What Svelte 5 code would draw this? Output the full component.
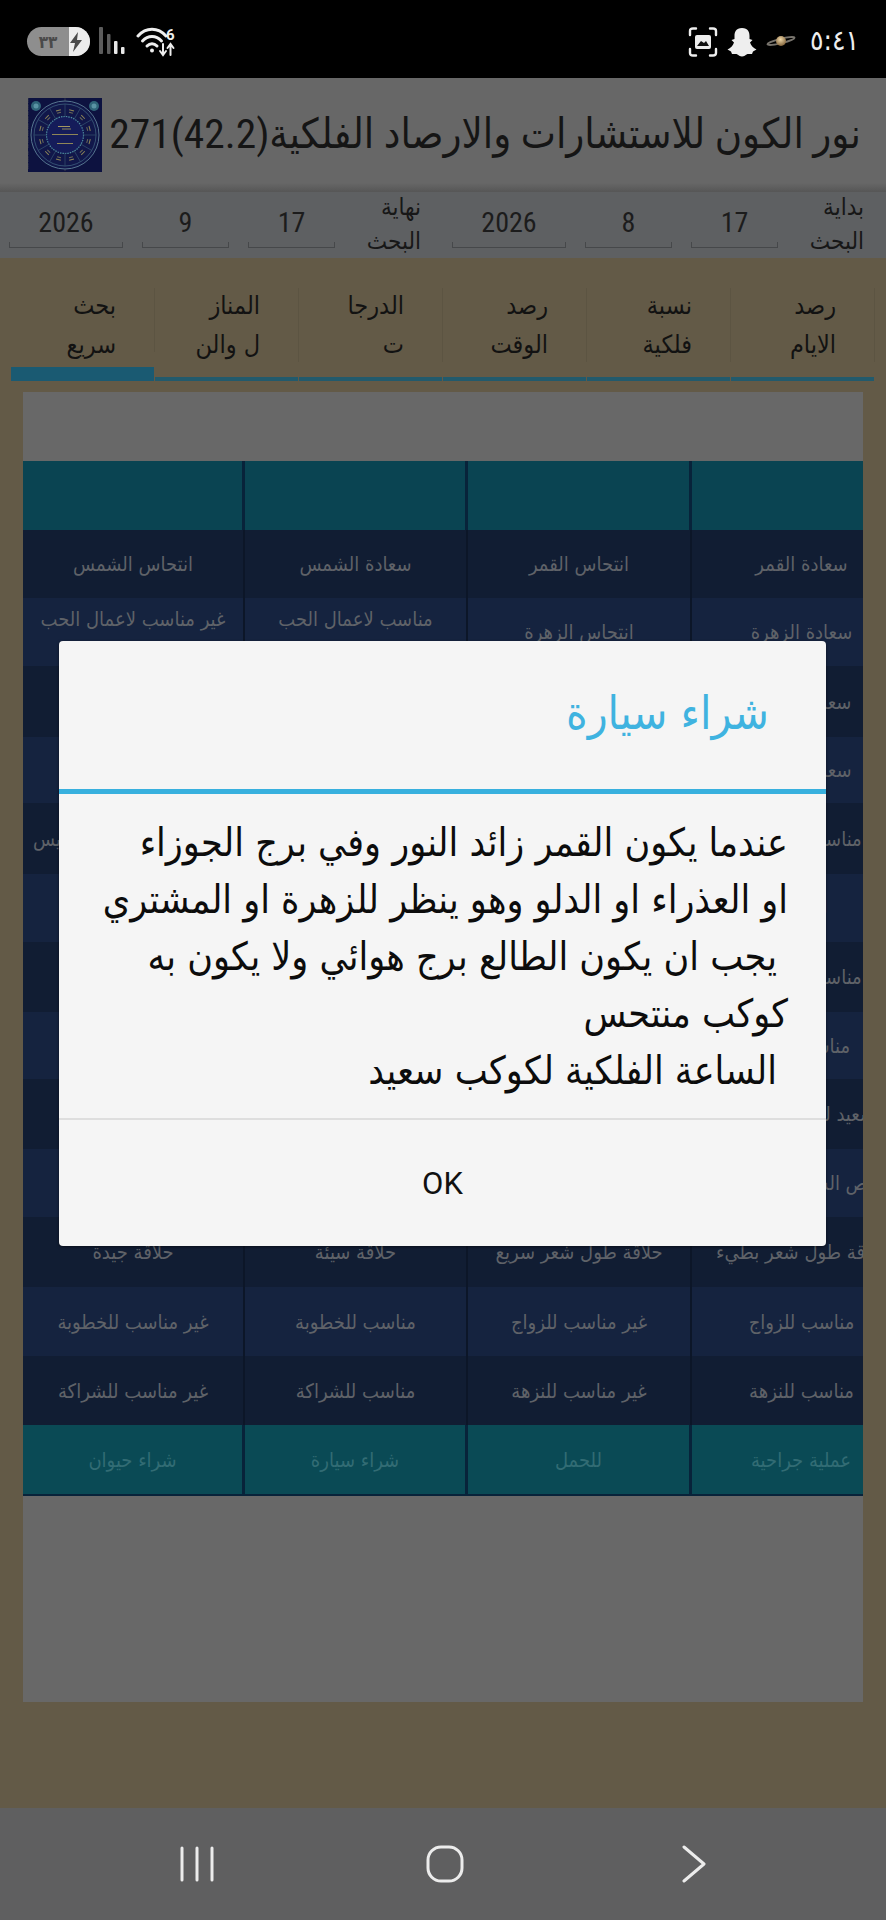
<script>
  const rows = [
    ['سعادة القمر','انتحاس القمر','سعادة الشمس','انتحاس الشمس'],
    ['سعادة الزهرة','انتحاس الزهرة','مناسب لاعمال الحب والزواج','غير مناسب لاعمال الحب والزواج'],
    ['سعادة المريخ','انتحاس المريخ','',''],
    ['سعادة عطارد','انتحاس عطارد','',''],
    ['مناسب لمجالس','','','غير مناسب لمقابلة الرئيس'],
    ['للتجارة','','',''],
    ['مناسب لمجالس','','',''],
    ['مناسب للعلم','','',''],
    ['سعيد للقاء الاصدقاء','','','غير سعيد لهذه الايام'],
    ['قص الشعر والاظافر','','',''],
    ['حلاقة طول شعر بطيء','حلاقة طول شعر سريع','حلاقة سيئة','حلاقة جيدة'],
    ['مناسب للزواج','غير مناسب للزواج','مناسب للخطوبة','غير مناسب للخطوبة'],
    ['مناسب للنزهة','غير مناسب للنزهة','مناسب للشراكة','غير مناسب للشراكة'],
  ];
  const heights = [68,68,71,66,71,68,70,67,70,68,70,69,69];
  const last = ['عملية جراحية','للحمل','شراء سيارة','شراء حيوان'];
  const tabs = [['بحث','سريع'],['المناز','ل والن'],['الدرجا','ت'],['رصد','الوقت'],['نسبة','فلكية'],['رصد','الايام']];
  const seg = Array.from({length:12},(_,i)=>i*30);
  const stars = Array.from({length:60},(_,i)=>[(i*37)%74,(i*53+11)%73]);
</script>

<div class="screen">
  <header class="status">
    <div class="status-left">
      <div class="battery">
        <span class="bat-num">٣٣</span>
        <span class="bat-end">
          <svg width="14" height="20" viewBox="0 0 14 20"><polygon points="9,0 1,11 6,11 4,20 13,8 8,8" fill="#4a4a4a"/></svg>
        </span>
      </div>
      <svg width="28" height="28" viewBox="0 0 28 28">
        <rect x="0" y="0" width="4" height="27" rx="1" fill="#5c5c5c"/>
        <rect x="8" y="7" width="3.500" height="20" rx="1" fill="#5c5c5c"/>
        <rect x="15" y="14" width="3.500" height="13" rx="1" fill="#e8e8e8"/>
        <rect x="22" y="20" width="3.500" height="7" rx="1" fill="#e8e8e8"/>
      </svg>
      <svg class="wifi" width="42" height="30" viewBox="0 0 42 30" fill="none" stroke="#eee" stroke-width="3" stroke-linecap="round">
        <path d="M2 9 C10 0 22 0 30 9"/>
        <path d="M6.500 14 C12 8 20 8 25.500 14"/>
        <path d="M11 19 C14 16 18 16 21 19"/>
        <circle cx="16" cy="23.500" r="2" fill="#eee" stroke="none"/>
        <path d="M27 17 V27 M24 24 L27 28 L30 24" stroke-width="2"/>
        <path d="M34.500 28 V18 M31.500 21 L34.500 17 L37.500 21" stroke-width="2"/>
        <text x="30" y="13" class="six" fill="#eee" stroke="none">6</text>
      </svg>
    </div>
    <div class="status-right">
      <svg width="30" height="30" viewBox="0 0 30 30" fill="none" stroke="#eee" stroke-width="2.400" stroke-linecap="round">
        <path d="M2 8 V4 Q2 1.500 5 1.500 H8 M22 1.500 H25 Q28 1.500 28 4 V8 M28 22 V26 Q28 28.500 25 28.500 H22 M8 28.500 H5 Q2 28.500 2 26 V22"/>
        <rect x="7" y="8" width="16" height="14" rx="2" fill="#eee" stroke="none"/>
        <path d="M9 19 L13 14 L16 16 L18 14 L21 19 Z" fill="#111" stroke="none"/>
      </svg>
      <svg width="30" height="30" viewBox="0 0 30 30"><path d="M15 1 C9 1 7.500 5 7.500 9 V12 L4.500 13 L7 15.500 C6 19 3.500 21 0.500 22.500 L4 24.500 L5 27 L9.500 27 C11.500 28 13 29.500 15 29.500 C17 29.500 18.500 28 20.500 27 L25 27 L26 24.500 L29.500 22.500 C26.500 21 24 19 23 15.500 L25.500 13 L22.500 12 V9 C22.500 5 21 1 15 1 Z" fill="#eee"/></svg>
      <svg class="saturn" width="30" height="14" viewBox="0 0 30 14">
        <defs><radialGradient id="sat" cx=".45" cy=".35" r=".7"><stop offset="0" stop-color="#f0d8a8"/><stop offset="1" stop-color="#7a5c34"/></radialGradient></defs>
        <ellipse cx="15" cy="7" rx="14" ry="2.200" transform="rotate(-14 15 7)" fill="none" stroke="#77736c" stroke-width="1.800"/>
        <circle cx="15" cy="7" r="5" fill="url(#sat)"/>
      </svg>
      <span class="time">٥:٤١</span>
    </div>
  </header>

  <section class="titlebar">
    <div class="title">نور الكون للاستشارات والارصاد الفلكية(42.2)271</div>
    <svg class="logo" width="74" height="74" viewBox="0 0 74 74">
      <rect width="74" height="74" fill="#0d1240"/>
      {#each stars as s}<circle cx={s[0]} cy={s[1]} r=".5" fill="#6f6c58"/>{/each}
      <circle cx="8" cy="8" r="5" fill="#2f6478"/>
      <circle cx="8" cy="8" r="2.500" fill="#5a94a4"/>
      <circle cx="66" cy="8" r="5" fill="#2f6478"/>
      <circle cx="66" cy="8" r="2.500" fill="#5a94a4"/>
      <circle cx="37" cy="37" r="34" fill="#11174a" stroke="#56758f" stroke-width="1"/>
      <circle cx="37" cy="37" r="31" fill="none" stroke="#3d5f7d" stroke-width=".8"/>
      <circle cx="37" cy="37" r="18.500" fill="#151c5a" stroke="#4d8c9e" stroke-width="1.200" stroke-dasharray="1.500 1"/>
      {#each seg as a}
        <line x1="37" y1="19" x2="37" y2="6" stroke="#34506f" stroke-width=".7" transform="rotate({a} 37 37)"/>
        <rect x="34.500" y="11" width="5" height="1" fill="#8f8657" transform="rotate({a+15} 37 37)"/>
        <rect x="35" y="13.500" width="4" height="1" fill="#6f6c58" transform="rotate({a+15} 37 37)"/>
      {/each}
      <rect x="30" y="28" width="12" height="1" fill="#a39760"/>
      <rect x="34" y="30.500" width="9" height="1" fill="#8f8657"/>
      <rect x="24" y="36" width="26" height="1" fill="#8f8657"/>
      <rect x="29" y="45" width="16" height="1" fill="#8f8657"/>
    </svg>
  </section>

  <section class="dates">
    <div class="d-label">بداية<br />البحث</div>
    <div class="d-input w87">17</div>
    <div class="d-input w87">8</div>
    <div class="d-input w114 before">2026</div>
    <div class="d-label">نهاية<br />البحث</div>
    <div class="d-input w87">17</div>
    <div class="d-input w87">9</div>
    <div class="d-input w114">2026</div>
  </section>

  <main class="body">
    <nav class="tabs">
      {#each tabs as t, i}
        <div class="tab" class:on={i === 0}>
          <div class="tab-text">{t[0]}<br />{t[1]}</div>
        </div>
      {/each}
    </nav>

    <section class="panel">
      <div class="gridwrap">
        <div class="row teal head">
          {#each [0,1,2,3] as c}<div class="cell"></div>{/each}
        </div>
        {#each rows as r, ri}
          <div class="row" class:odd={ri % 2 === 0} class:even={ri % 2 === 1} style="height:{heights[ri]}px">
            {#each [3,2,1,0] as c}<div class="cell" class:up={ri === 1 && c > 1}>{r[c]}</div>{/each}
          </div>
        {/each}
        <div class="row teal foot">
          {#each [3,2,1,0] as c}<div class="cell">{last[c]}</div>{/each}
        </div>
      </div>
    </section>
  </main>

  <footer class="nav">
    <svg class="n1" width="34" height="36" viewBox="0 0 34 36" fill="none" stroke="#ececec" stroke-width="3" stroke-linecap="round">
      <path d="M2 2 V34 M17 2 V34 M32 2 V34"/>
    </svg>
    <svg class="n2" width="38" height="38" viewBox="0 0 38 38" fill="none" stroke="#ececec" stroke-width="3">
      <rect x="2" y="2" width="34" height="34" rx="13"/>
    </svg>
    <svg class="n3" width="24" height="38" viewBox="0 0 24 38" fill="none" stroke="#ececec" stroke-width="3" stroke-linecap="round" stroke-linejoin="round">
      <path d="M2 2 L22 19 L2 36"/>
    </svg>
  </footer>

  <div class="dialog" role="dialog">
    <div class="d-title">شراء سيارة</div>
    <div class="d-rule"></div>
    <div class="d-msg">
      <div>عندما يكون القمر زائد النور وفي برج الجوزاء</div>
      <div>او العذراء او الدلو وهو ينظر للزهرة او المشتري</div>
      <div class="in">يجب ان يكون الطالع برج هوائي ولا يكون به</div>
      <div>كوكب منتحس</div>
      <div class="in">الساعة الفلكية لكوكب سعيد</div>
    </div>
    <div class="d-ok">OK</div>
  </div>
</div>

<style>
  :global(body) { margin: 0; background: #000; }
  .screen {
    position: relative;
    width: 886px;
    height: 1920px;
    overflow: hidden;
    display: flex;
    flex-direction: column;
    font-family: "DejaVu Sans", "Noto Sans", sans-serif;
    font-stretch: condensed;
  }
  .status {
    height: 78px;
    flex: none;
    background: #000;
    display: flex;
    justify-content: space-between;
    padding: 27px 30px 0 27px;
    box-sizing: border-box;
  }
  .status-left { display: flex; gap: 9px; align-items: flex-start; }
  .status-right { display: flex; gap: 9px; align-items: flex-start; color: #eee; }
  .battery {
    width: 63px;
    height: 29px;
    border-radius: 15px;
    background: #8e8e8e;
    overflow: hidden;
    display: flex;
    align-items: center;
  }
  .bat-num { width: 42px; text-align: center; font-size: 17px; font-weight: 700; color: #4a4a4a; }
  .bat-end { flex: 1; height: 100%; background: #ececec; display: flex; align-items: center; }
  .six { font: 700 15px Roboto, sans-serif; }
  .saturn { margin: 7px 5px 0 0; }
  .time { width: 46px; text-align: right; font-size: 28px; line-height: 28px; white-space: nowrap; }

  .titlebar {
    height: 114px;
    flex: none;
    box-sizing: border-box;
    background: linear-gradient(#676767 92%, #565656);
    display: flex;
    flex-direction: row-reverse;
    align-items: flex-start;
    justify-content: space-between;
    padding: 20px 25px 0 28px;
  }
  .title {
    direction: rtl;
    color: #151515;
    font-size: 41.500px;
    line-height: 72px;
    white-space: nowrap;
    font-family: Roboto, "DejaVu Sans", sans-serif;
  }

  .dates {
    height: 66px;
    flex: none;
    background: #5e6062;
    direction: rtl;
    display: flex;
    align-items: flex-start;
    padding-right: 22px;
    box-sizing: border-box;
    color: #171717;
  }
  .d-label {
    flex: none;
    width: 55px;
    margin-left: 31px;
    font-size: 24px;
    line-height: 34px;
    margin-top: -2px;
    white-space: nowrap;
  }
  .d-input {
    flex: none;
    position: relative;
    height: 56px;
    margin-left: 19px;
    text-align: center;
    line-height: 62px;
    font-family: Roboto, sans-serif;
    font-size: 28px;
    color: #1c1c1c;
  }
  .d-input:last-child { margin-left: 0; }
  .d-input::after {
    content: "";
    position: absolute;
    left: 0;
    right: 0;
    bottom: 0;
    height: 6px;
    border: 1px solid #46484a;
    border-top: 0;
    box-sizing: border-box;
  }
  .w87 { width: 87px; }
  .w114 { width: 114px; }
  .before { margin-left: 31px; }

  .body {
    flex: 1;
    background: #635a47;
    display: flex;
    flex-direction: column;
    min-height: 0;
  }
  .tabs {
    display: flex;
    padding: 30px 11px 0;
    height: 93px;
    flex: none;
  }
  .tab {
    width: 143px;
    margin-right: 1px;
    height: 93px;
    box-sizing: border-box;
    position: relative;
    border-bottom: 4px solid #225a6c;
    direction: rtl;
    padding-right: 38px;
    font-size: 25px;
    line-height: 39px;
    color: #121212;
    flex: none;
  }
  .tab::after { content: ""; position: absolute; right: -1px; top: 0; bottom: 15px; width: 1px; background: #5c5442; }
  .tab-text { margin-top: -2px; white-space: nowrap; }
  .tab.on { border-bottom-width: 14px; border-bottom-color: #1a5a72; }
  .panel {
    margin: 11px 23px 0;
    height: 1310px;
    background: #686868;
    overflow: hidden;
    flex: none;
  }
  .gridwrap { width: 890px; margin-top: 69px; }
  .row { display: grid; grid-template-columns: 222px 223px 224px 221px; }
  .cell {
    box-sizing: border-box;
    border-right: 2px solid #0c1628;
    display: flex;
    align-items: center;
    justify-content: center;
    text-align: center;
    font-size: 20px;
    line-height: 36px;
    color: #5f6268;
    direction: rtl;
    overflow: hidden;
    white-space: nowrap;
  }
  .cell.up { align-items: flex-start; padding: 3px 8px 0; white-space: normal; }
  .odd { background: #111d33; }
  .even { background: #15233f; }
  .teal { background: #0a4452; }
  .teal .cell { border-right: 3px solid #08233a; color: #326c74; }
  .head { height: 69px; }
  .foot { height: 69px; border-bottom: 2px solid #08233a; background: #0a4a55; }

  .nav {
    height: 112px;
    flex: none;
    background: #5f5f60;
    display: flex;
    align-items: center;
    padding-left: 180px;
    box-sizing: border-box;
  }
  .n2 { margin-left: 212px; }
  .n3 { margin-left: 218px; }

  .dialog {
    position: absolute;
    left: 59px;
    top: 641px;
    width: 767px;
    height: 605px;
    background: #f5f5f5;
    border-radius: 4px;
    box-shadow: 0 1px 3px rgba(0,0,0,.5);
    direction: rtl;
    display: flex;
    flex-direction: column;
  }
  .d-title {
    height: 148px;
    box-sizing: border-box;
    padding: 42px 57px 0 0;
    color: #3fb3e0;
    font-size: 46px;
    line-height: 60px;
  }
  .d-rule { height: 5px; background: #38b0de; }
  .d-msg {
    height: 326px;
    box-sizing: border-box;
    padding: 20px 38px 0 0;
    font-size: 39px;
    line-height: 57px;
    color: #0c0c0c;
    white-space: nowrap;
    border-bottom: 2px solid #dedede;
  }
  .d-msg .in { padding-right: 11px; }
  .d-ok {
    flex: 1;
    display: flex;
    align-items: center;
    justify-content: center;
    font: 31px Roboto, sans-serif;
    color: #111;
  }
</style>
